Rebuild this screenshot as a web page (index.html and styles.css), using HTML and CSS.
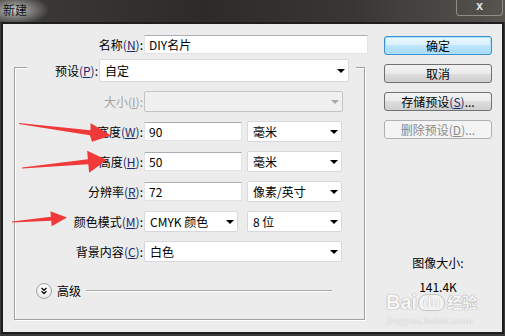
FILE: index.html
```html
<!DOCTYPE html>
<html lang="zh">
<head>
<meta charset="utf-8">
<title>新建</title>
<link rel="stylesheet" href="styles.css">
</head>
<body>
<div class="window">
  <div class="titlebar">
    <span class="title">新建</span>
    <span class="close">x</span>
  </div>
  <div class="dialog">
    <div class="left">
      <div class="name-row">
        <label class="lbl">名称<span class="mn">(<u>N</u>)</span>:</label>
        <div class="input w-name">DIY名片</div>
      </div>
      <div class="group">
        <div class="legend">
          <label class="lbl">预设<span class="mn">(<u>P</u>)</span>:</label>
          <div class="select w-preset">自定</div>
        </div>
        <div class="frow first">
          <label class="lbl dis">大小(<u>I</u>):</label>
          <div class="select disabled w-full"></div>
        </div>
        <div class="frow">
          <label class="lbl">宽度<span class="mn">(<u>W</u>)</span>:</label>
          <div class="input w-num">90</div>
          <div class="select w-unit gap">毫米</div>
        </div>
        <div class="frow">
          <label class="lbl">高度<span class="mn">(<u>H</u>)</span>:</label>
          <div class="input w-num">50</div>
          <div class="select w-unit gap">毫米</div>
        </div>
        <div class="frow">
          <label class="lbl">分辨率<span class="mn">(<u>R</u>)</span>:</label>
          <div class="input w-num">72</div>
          <div class="select w-unit gap">像素/英寸</div>
        </div>
        <div class="frow">
          <label class="lbl">颜色模式<span class="mn">(<u>M</u>)</span>:</label>
          <div class="select w-mode">CMYK 颜色</div>
          <div class="select w-unit gap2">8 位</div>
        </div>
        <div class="frow">
          <label class="lbl">背景内容<span class="mn">(<u>C</u>)</span>:</label>
          <div class="select w-bg">白色</div>
        </div>
        <div class="adv">
          <span class="circle">
            <svg width="14" height="14" viewBox="0 0 14 14"><path d="M4.5 4 L7 6.3 L9.5 4 M4.5 7.3 L7 9.6 L9.5 7.3" fill="none" stroke="#111" stroke-width="1.4"/></svg>
          </span>
          <span class="adv-text">高级</span>
          <span class="adv-line"></span>
        </div>
      </div>
    </div>
    <div class="right">
      <div class="btn default">确定</div>
      <div class="btn">取消</div>
      <div class="btn">存储预设<span class="mn">(<u>S</u>)</span>...</div>
      <div class="btn disabled">删除预设(<u>D</u>)...</div>
      <div class="imgsize">
        <div class="is-label">图像大小:</div>
        <div class="is-value">141.4K</div>
      </div>
    </div>
  </div>
  <div class="watermark">
    <div class="wm-logo"><span class="wm-bai">Bai</span><span class="wm-du">du</span><span class="wm-jy">经验</span></div>
    <div class="wm-url">jingyan.baidu.com</div>
  </div>
  <svg class="arrows" width="505" height="336" viewBox="0 0 505 336">
    <polygon fill="#f03a3a" points="19,123 90.5,130.3 90.5,123 111,135.5 92,141.8 89.9,135.3 19,124"/>
    <polygon fill="#f03a3a" points="22,167.5 87.9,159.3 87.1,150.8 107,160 89.1,172.7 88.3,164.3 22,168.5"/>
    <polygon fill="#f03a3a" points="12,221.5 50.9,216.8 50.4,211.3 67,217.5 51.7,226.3 51.2,220.8 12,222.5"/>
  </svg>
</div>
</body>
</html>
```
FILE: styles.css
```css
* { box-sizing: border-box; }

body {
  margin: 0;
  background: #3a3937;
  font-family: "Noto Sans CJK SC", "Noto Sans", sans-serif;
  font-size: 12px;
  color: #000;
}

.window {
  position: relative;
  width: 505px;
  height: 336px;
  background: #3a3937;
  overflow: hidden;
}

.titlebar {
  height: 22px;
  display: flex;
  justify-content: space-between;
  align-items: flex-start;
  background:
    radial-gradient(ellipse 34px 15px at 15px 10px, rgba(215,215,210,0.95) 0%, rgba(200,200,195,0.5) 45%, rgba(200,200,195,0) 100%),
    linear-gradient(90deg, #3d3c39 0%, #2c2b29 40%, #383734 70%, #56544f 100%);
}

.title {
  margin: 2px 0 0 3px;
  line-height: 16px;
  color: #111;
}

.close {
  width: 47px;
  height: 16px;
  margin-right: 2px;
  border: 1px solid #8e8d8a;
  border-top: none;
  border-radius: 0 0 4px 4px;
  color: #e6e6e6;
  font: bold 12px "Liberation Sans", sans-serif;
  text-align: center;
  line-height: 12px;
}

.dialog {
  margin: 0 1px;
  height: 312px;
  border: 2px solid #1e1e1e;
  background: #ececec;
  display: flex;
}

.left { width: 365px; flex: none; }

.right {
  width: 108px;
  flex: none;
  margin-left: 16px;
  padding-top: 12px;
  display: flex;
  flex-direction: column;
}

.lbl {
  flex: none;
  text-align: right;
  white-space: nowrap;
  color: #000;
}
.lbl u, .btn u { text-decoration: underline; text-underline-offset: 1px; }
.mn { color: #1b2a6e; }
.lbl.dis { color: #a2a2a2; }

.name-row {
  display: flex;
  margin-top: 11px;
  height: 19px;
}
.name-row .lbl { width: 140px; line-height: 19px; margin-right: 1px; }

.input {
  height: 19px;
  background: #fff;
  border: 1px solid #e2e3e8;
  border-top-color: #abadb3;
  line-height: 17px;
  padding-left: 4px;
  white-space: nowrap;
}

.select {
  position: relative;
  height: 21px;
  background: #fff;
  border: 1px solid #d6d8dd;
  border-radius: 2px;
  line-height: 19px;
  padding-left: 5px;
  white-space: nowrap;
}
.select::after {
  content: "";
  position: absolute;
  right: 3px;
  top: 8px;
  border-left: 4px solid transparent;
  border-right: 4px solid transparent;
  border-top: 4px solid #000;
}
.select.disabled {
  background: #f0f0f0;
  border-color: #c4c4c4;
}
.select.disabled::after { border-top-color: #a8a8a8; }

.w-name { width: 224px; }
.w-preset { width: 250px; }
.w-full { width: 199px; }
.w-bg { width: 198px; }
.w-num { width: 98px; }
.w-unit { width: 95px; }
.w-mode { width: 94px; }
.gap { margin-left: 5px; }
.gap2 { margin-left: 9px; }

.group {
  margin: 13px 0 0 11px;
  width: 351px;
  border: 1px solid #a0a0a0;
  box-shadow: 1px 1px 0 #fff, inset 1px 1px 0 #fff;
  padding-bottom: 19px;
}

.legend {
  display: flex;
  margin: -9px 0 0 12px;
  width: 329px;
  height: 23px;
  background: #ececec;
}
.legend .lbl { width: 71px; line-height: 23px; margin-right: 1px; }
.legend .select { height: 23px; line-height: 21px; }
.legend .select::after { top: 9px; }

.frow {
  display: flex;
  align-items: flex-start;
  height: 30px;
  padding-top: 5px;
}
.frow.first { margin-top: 4px; }
.frow .lbl { width: 128px; line-height: 21px; margin-right: 1px; }
.frow .input { margin-top: 1px; }

.adv {
  display: flex;
  align-items: center;
  height: 18px;
  margin-top: 16px;
  padding-left: 21px;
  padding-right: 32px;
}
.circle {
  width: 16px;
  height: 16px;
  border-radius: 50%;
  border: 1px solid #a3a3a3;
  background: radial-gradient(circle at 50% 35%, #ffffff 0%, #f4f4f4 50%, #d6d6d6 100%);
  display: flex;
  align-items: center;
  justify-content: center;
}
.adv-text { margin-left: 5px; line-height: 18px; }
.adv-line {
  flex: 1;
  height: 1px;
  margin: -2px 0 0 5px;
  background: #a9a9a9;
  box-shadow: 0 1px 0 #fff;
}

.btn {
  height: 19px;
  margin-bottom: 9px;
  border: 1px solid #707070;
  border-radius: 3px;
  background: linear-gradient(#f2f2f2 0%, #ebebeb 50%, #dddddd 50%, #cfcfcf 100%);
  text-align: center;
  line-height: 17px;
  white-space: nowrap;
}
.btn.default {
  border-color: #3c8fd0;
  background: linear-gradient(#eaf6fd 0%, #d9f0fc 50%, #bee6fd 50%, #a7d9f5 100%);
  box-shadow: inset 0 0 0 1px #a9e2fb;
}
.btn.disabled {
  border-color: #adb2b5;
  background: #f4f4f4;
  color: #8a8a8a;
}

.imgsize {
  margin-top: 107px;
  text-align: center;
  line-height: 16px;
}
.is-value { margin-top: 8px; }

.watermark {
  position: absolute;
  left: 386px;
  top: 292px;
  width: 94px;
  color: #f7f7f7;
}
.wm-logo {
  display: flex;
  align-items: center;
  height: 20px;
}
.wm-bai {
  font: bold 20px "Liberation Sans", sans-serif;
  line-height: 20px;
  text-shadow: 0 0 1px #9c9c9c, 0 0 1px #9c9c9c;
}
.wm-du {
  margin-left: 1px;
  width: 27px;
  height: 17px;
  border: 1px solid #c4c4c4;
  border-radius: 9px 9px 7px 7px;
  background: #f3f3f3;
  font: bold 14px "Liberation Sans", sans-serif;
  line-height: 14px;
  text-align: center;
  text-shadow: 0 0 1px #9c9c9c;
}
.wm-jy {
  margin-left: 2px;
  font: bold 15px "Noto Sans CJK SC", sans-serif;
  line-height: 20px;
  text-shadow: 0 0 1px #9c9c9c, 0 0 1px #9c9c9c;
}
.wm-url {
  margin-top: 2px;
  font: 11px "Liberation Serif", serif;
  line-height: 12px;
  letter-spacing: 0.3px;
  text-shadow: 0 0 1px #a5a5a5;
}

.arrows {
  position: absolute;
  left: 0;
  top: 0;
  pointer-events: none;
}
```
